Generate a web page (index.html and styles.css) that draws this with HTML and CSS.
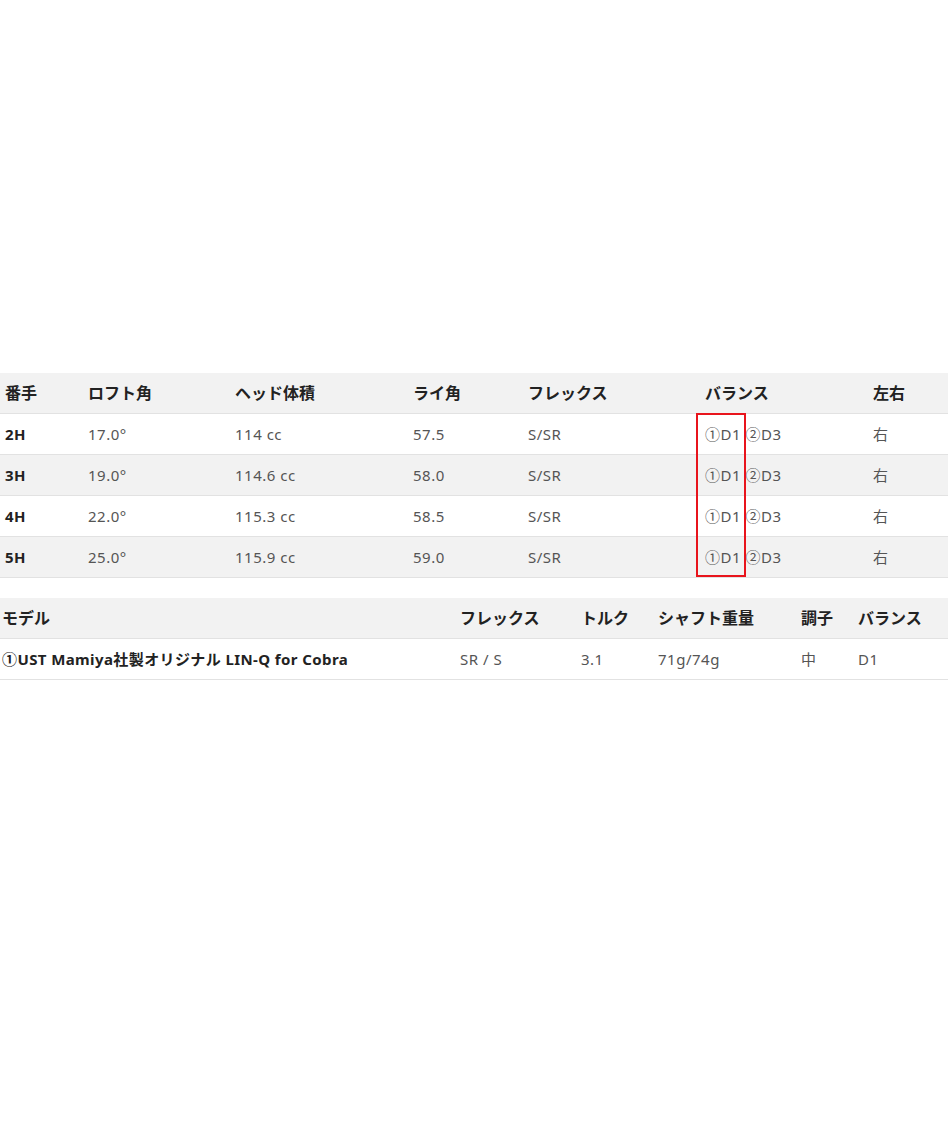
FILE: index.html
```html
<!DOCTYPE html>
<html lang="ja">
<head>
<meta charset="utf-8">
<link rel="stylesheet" href="styles.css">
</head>
<body>
<div class="page">
  <div class="spec-wrap">
    <table class="spec">
      <colgroup>
        <col class="c1"><col class="c2"><col class="c3"><col class="c4"><col class="c5"><col class="c6"><col class="c7">
      </colgroup>
      <thead>
        <tr><th>番手</th><th>ロフト角</th><th>ヘッド体積</th><th>ライ角</th><th>フレックス</th><th>バランス</th><th>左右</th></tr>
      </thead>
      <tbody>
        <tr><th>2H</th><td>17.0°</td><td>114 cc</td><td>57.5</td><td>S/SR</td><td>①D1 ②D3</td><td>右</td></tr>
        <tr><th>3H</th><td>19.0°</td><td>114.6 cc</td><td>58.0</td><td>S/SR</td><td>①D1 ②D3</td><td>右</td></tr>
        <tr><th>4H</th><td>22.0°</td><td>115.3 cc</td><td>58.5</td><td>S/SR</td><td>①D1 ②D3</td><td>右</td></tr>
        <tr><th>5H</th><td>25.0°</td><td>115.9 cc</td><td>59.0</td><td>S/SR</td><td>①D1 ②D3</td><td>右</td></tr>
      </tbody>
    </table>
    <div class="highlight"></div>
  </div>

  <table class="shaft">
    <colgroup>
      <col class="s1"><col class="s2"><col class="s3"><col class="s4"><col class="s5"><col class="s6">
    </colgroup>
    <thead>
      <tr><th>モデル</th><th>フレックス</th><th>トルク</th><th>シャフト重量</th><th>調子</th><th>バランス</th></tr>
    </thead>
    <tbody>
      <tr><th>①UST Mamiya社製オリジナル LIN-Q for Cobra</th><td>SR / S</td><td>3.1</td><td>71g/74g</td><td>中</td><td>D1</td></tr>
    </tbody>
  </table>
</div>
</body>
</html>
```

FILE: styles.css
```css
html, body {
  margin: 0;
  padding: 0;
  background: #fff;
}

body {
  font-family: "Noto Sans", "Noto Sans CJK JP", sans-serif;
  font-size: 15px;
  color: #555;
}

.page {
  width: 948px;
  padding-top: 373px;
}

.spec-wrap {
  position: relative;
}

table {
  width: 948px;
  border-collapse: collapse;
  table-layout: fixed;
}

th, td {
  text-align: left;
  height: 40px;
  padding: 0 0 0 5px;
  line-height: 20px;
  border-bottom: 1px solid #e2e2e2;
  white-space: nowrap;
  vertical-align: middle;
}

thead th {
  background: #f2f2f2;
  color: #222;
  font-weight: 700;
  font-size: 16px;
}

tbody th {
  color: #222;
  font-weight: 700;
  letter-spacing: 0.4px;
}

tbody td {
  font-weight: 400;
  letter-spacing: 0.5px;
}

tbody tr:nth-child(even) {
  background: #f2f2f2;
}

.c1 { width: 83px; }
.c2 { width: 147px; }
.c3 { width: 178px; }
.c4 { width: 115px; }
.c5 { width: 177px; }
.c6 { width: 168px; }
.c7 { width: 80px; }

.highlight {
  position: absolute;
  left: 696px;
  top: 40px;
  width: 46px;
  height: 160px;
  border: 2px solid #e8141c;
}

.shaft {
  margin-top: 20px;
}

.shaft th, .shaft td {
  padding-left: 2px;
}

.s1 { width: 458px; }
.s2 { width: 121px; }
.s3 { width: 77px; }
.s4 { width: 143px; }
.s5 { width: 57px; }
.s6 { width: 92px; }
```
